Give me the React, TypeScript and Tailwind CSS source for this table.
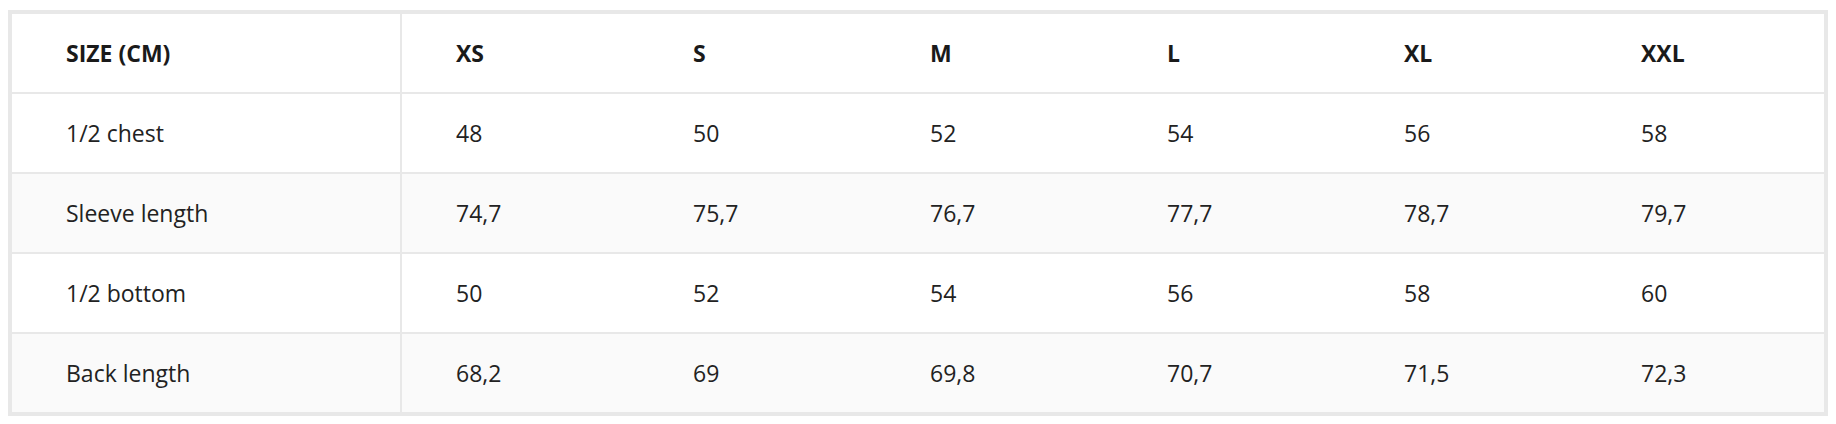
const HEADERS = ["SIZE (CM)", "XS", "S", "M", "L", "XL", "XXL"];

const ROWS = [
  ["1/2 chest", "48", "50", "52", "54", "56", "58"],
  ["Sleeve length", "74,7", "75,7", "76,7", "77,7", "78,7", "79,7"],
  ["1/2 bottom", "50", "52", "54", "56", "58", "60"],
  ["Back length", "68,2", "69", "69,8", "70,7", "71,5", "72,3"],
];

export default function App() {
  return (
    <div
      className="bg-white px-2 pt-[10px] pb-2 text-[#222]"
      style={{ fontFamily: '"Open Sans", "Noto Sans", sans-serif' }}
    >
      <div className="grid grid-cols-[390px_repeat(6,minmax(0,1fr))] gap-y-[2px] bg-[#e8e8e8] p-[4px]">
        {HEADERS.map((h, j) => (
          <div
            key={h}
            className={`flex h-[78px] items-center bg-white pl-[54px] text-[23px] font-bold text-[#1a1a1a] ${
              j === 0 ? "border-r-2 border-[#e8e8e8]" : ""
            }`}
          >
            {h}
          </div>
        ))}
        {ROWS.map((row, i) =>
          row.map((cell, j) => (
            <div
              key={`${i}-${j}`}
              className={`flex h-[78px] items-center pl-[54px] text-[23px] ${
                i % 2 === 1 ? "bg-[#fafafa]" : "bg-white"
              } ${j === 0 ? "border-r-2 border-[#e8e8e8]" : ""}`}
            >
              {cell}
            </div>
          ))
        )}
      </div>
    </div>
  );
}
